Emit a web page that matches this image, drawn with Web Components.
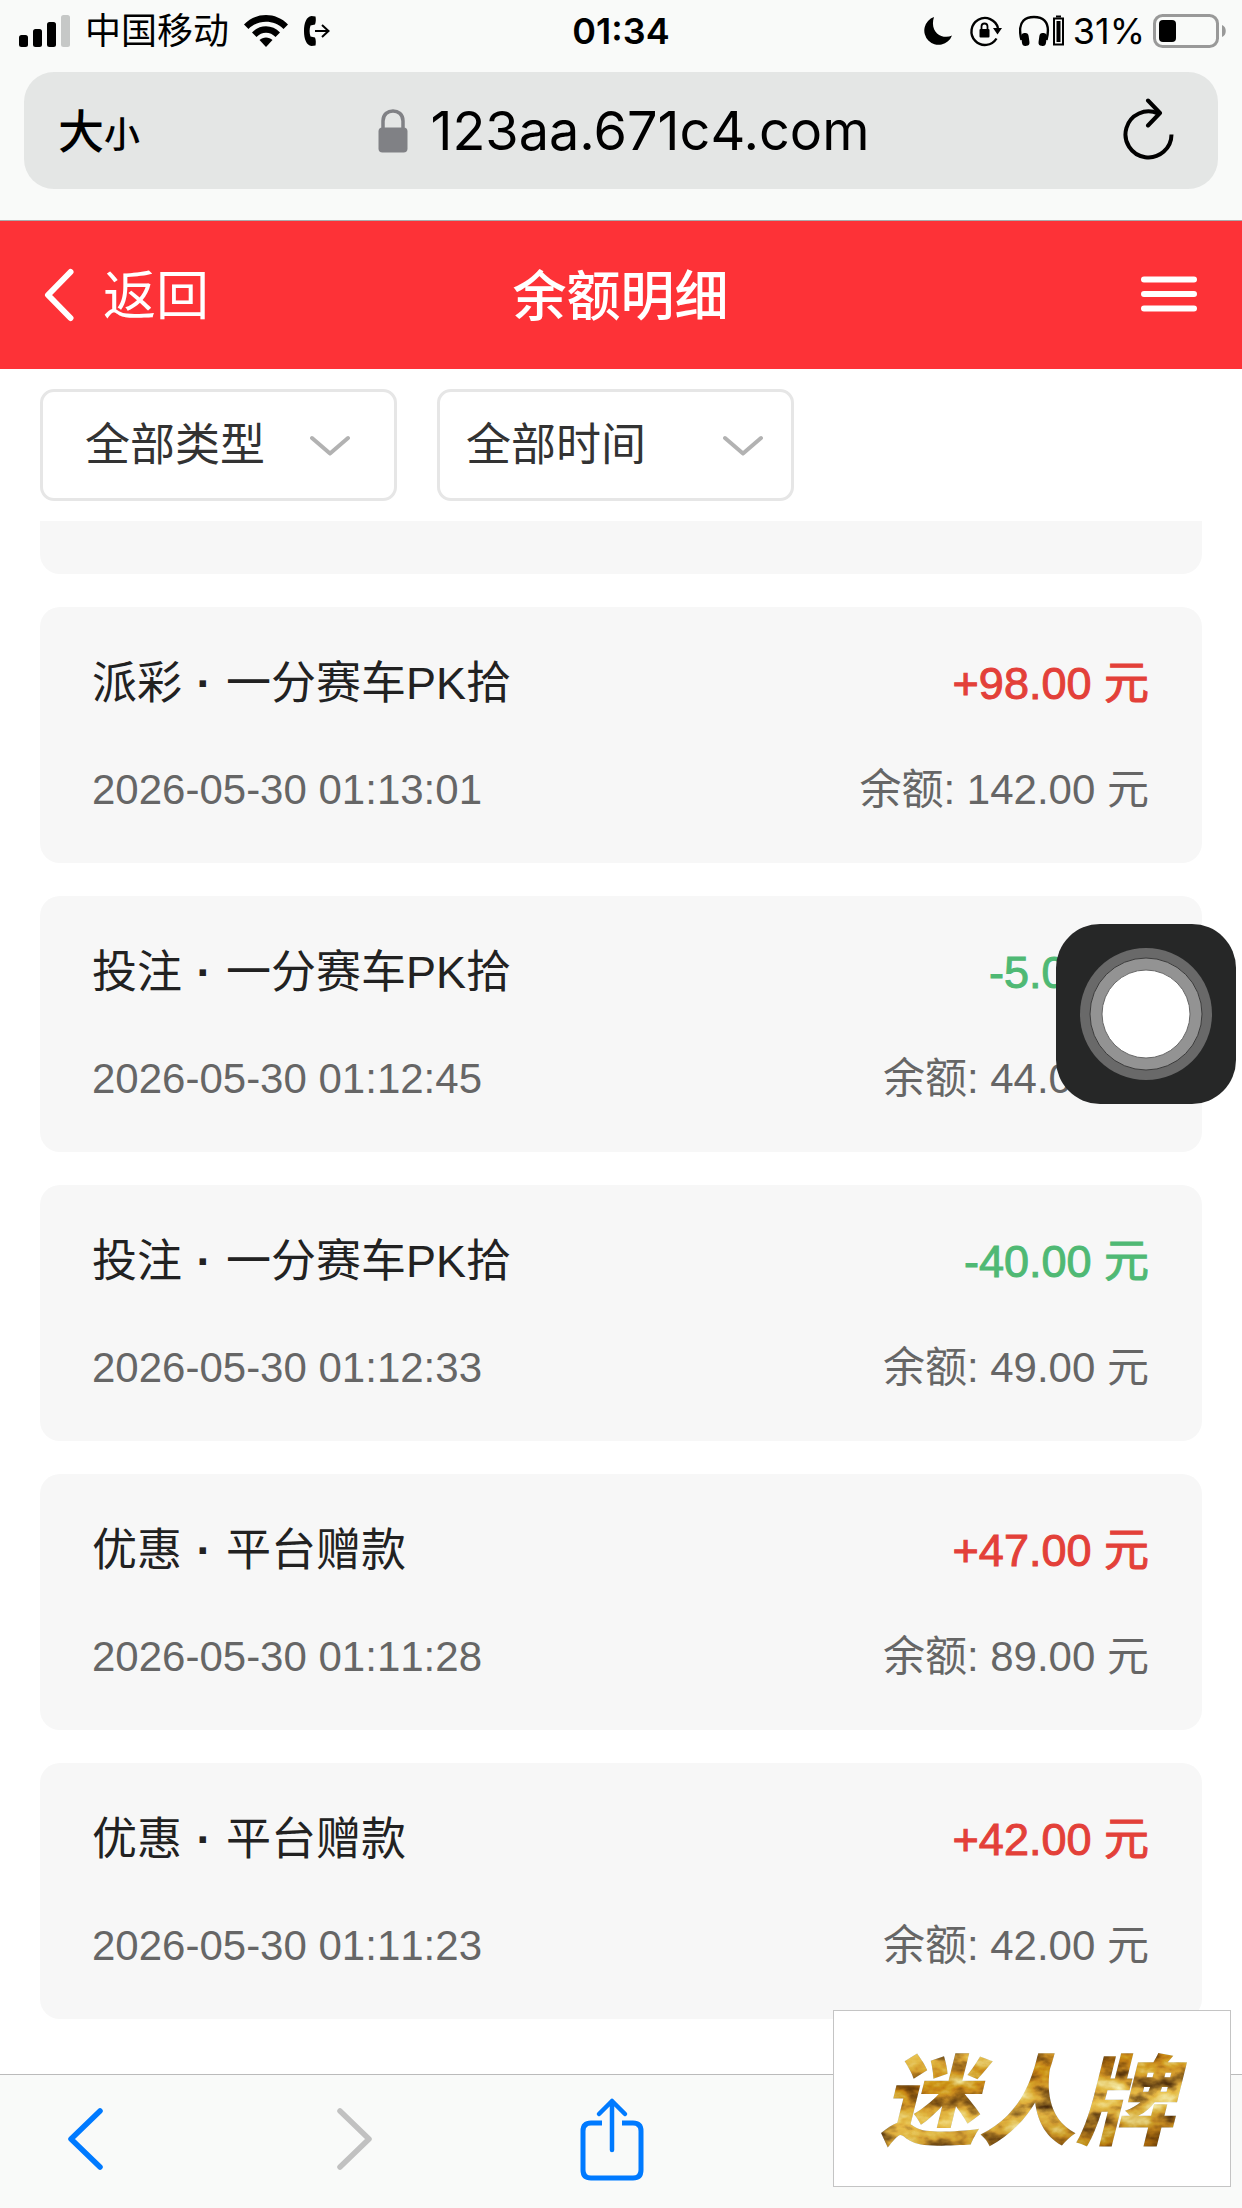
<!DOCTYPE html>
<html lang="zh-CN">
<head>
<meta charset="utf-8">
<meta name="viewport" content="width=device-width, initial-scale=1">
<title>余额明细</title>
<style>
	html, body {
		margin: 0;
		min-height: 100%;
	}
	body {
		background: #fff;
		color: #222;
		font-family: "Liberation Sans", "Noto Sans CJK SC", sans-serif;
		font-kerning: none;
	}
</style>
</head>
<body>
<balance-app></balance-app>

<script>
const icons = {
	signal: [52, 34, `
		<rect x="0" y="21" width="9" height="12" rx="2.5"/>
		<rect x="14" y="15" width="9" height="18" rx="2.5"/>
		<rect x="28" y="8" width="9" height="25" rx="2.5"/>
		<rect x="42" y="1" width="9" height="32" rx="2.5" fill="#c6c8c7"/>`],
	wifi: [46, 34, `
		<path d="M1 10.500C13-2.200 33-2.200 45 10.500L40.500 15C31 5.300 15 5.300 5.500 15Z"/>
		<path d="M9 18.500C16.500 10.300 29.500 10.300 37 18.500L32.500 23C27.300 17.300 18.700 17.300 13.500 23Z"/>
		<path d="M16.500 26C20 22.500 26 22.500 29.500 26L23 33Z"/>`],
	call: [28, 32, `
		<path d="M12.500 1.500L8.500 1C3.500 1.500 1 8 1 16C1 24 3.500 30.500 8.500 31L12.500 30.500C13 28 13 25 12 22.500L7.500 21.500C6.300 18 6.300 14 7.500 10.500L12 9.500C13 7 13 4 12.500 1.500Z"/>
		<path d="M12 16H25M19 10L25.500 16L19 22" fill="none" stroke="currentColor" stroke-width="2"/>`],
	moon: [30, 30, `<path d="M11 1A14.300 14.300 0 1 0 29 19.500C20 24 6 17 11 1Z"/>`],
	rotate: [34, 32, `
		<path d="M27.500 23.500A13.500 13.500 0 1 1 29 13" fill="none" stroke="currentColor" stroke-width="2.400"/>
		<path d="M24 13H33L28.500 19.500Z"/>
		<rect x="10.500" y="14" width="10" height="8.500" rx="1"/>
		<path d="M12.500 14V11.500A3 3 0 0 1 18.500 11.500V14" fill="none" stroke="currentColor" stroke-width="1.800"/>`],
	headphones: [46, 32, `
		<path d="M2.500 25C-3 4 9 2 15 2C21 2 33 4 27.500 25" fill="none" stroke="currentColor" stroke-width="2.400"/>
		<rect x="2.500" y="18" width="7.500" height="13" rx="3.500" transform="rotate(-8 6 24)"/>
		<rect x="20" y="18" width="7.500" height="13" rx="3.500" transform="rotate(8 24 24)"/>
		<rect x="35" y="3.500" width="9" height="26" fill="none" stroke="currentColor" stroke-width="2"/>
		<rect x="37.500" y="6" width="4" height="21"/>
		<rect x="37" y="0.500" width="5" height="2"/>`],
	battery: [76, 34, `
		<rect x="1.500" y="1.500" width="63" height="31" rx="8" fill="none" stroke="#999" stroke-width="3"/>
		<rect x="6" y="6" width="17" height="22" rx="4"/>
		<path d="M69 11C74 12.500 74 21.500 69 23Z" fill="#999"/>`],
	lock: [30, 44, `
		<rect x="0.500" y="18.500" width="29" height="25" rx="4"/>
		<path d="M5 20V12C5-1.500 25-1.500 25 12V20" fill="none" stroke="currentColor" stroke-width="3.500"/>`],
	reload: [52, 66, `
		<path d="M48.500 36.500A23 23 0 1 1 35 15.500H37" fill="none" stroke="currentColor" stroke-width="4"/>
		<path d="M25 2.500L37 15L25 27.500" fill="none" stroke="currentColor" stroke-width="4" stroke-linecap="round" stroke-linejoin="round"/>`],
	back: [30, 54, `<path d="M26.500 4L4 27L26.500 50" fill="none" stroke="currentColor" stroke-width="6" stroke-linecap="round" stroke-linejoin="round"/>`],
	menu: [56, 38, `<path d="M3 3.500H53M3 18H53M3 32.500H53" fill="none" stroke="currentColor" stroke-width="6" stroke-linecap="round"/>`],
	down: [42, 22, `<path d="M3 4L21 19.500L39 4" fill="none" stroke="currentColor" stroke-width="4" stroke-linecap="round" stroke-linejoin="round"/>`],
	prev: [36, 64, `<path d="M33 4L4 32L33 60" fill="none" stroke="currentColor" stroke-width="5.500" stroke-linecap="round" stroke-linejoin="round"/>`],
	next: [36, 64, `<path d="M3 4L32 32L3 60" fill="none" stroke="currentColor" stroke-width="5.500" stroke-linecap="round" stroke-linejoin="round"/>`],
	share: [64, 84, `
		<path d="M22 26H11Q3 26 3 34V73Q3 81 11 81H53Q61 81 61 73V34Q61 26 53 26H42" fill="none" stroke="currentColor" stroke-width="5"/>
		<path d="M32 53V4M19 17L32 4L45 17" fill="none" stroke="currentColor" stroke-width="4.500" stroke-linecap="round" stroke-linejoin="round"/>`]
};

class UiIcon extends HTMLElement {
	constructor() {
		super();
		this.attachShadow({mode: 'open'});
	}

	connectedCallback() {
		const [width, height, shape] = icons[this.getAttribute('name')];
		this.shadowRoot.innerHTML = `
			<style>
				:host { display: block; flex: none; }
				svg { display: block; }
			</style>
			<svg width="${width}" height="${height}" viewBox="0 0 ${width} ${height}" fill="currentColor" aria-hidden="true">${shape}</svg>
		`;
	}
}

class StatusBar extends HTMLElement {
	constructor() {
		super();
		this.attachShadow({mode: 'open'});
		this.shadowRoot.innerHTML = `
			<style>
				:host {
					display: grid;
					grid-template-columns: 1fr auto 1fr;
					align-items: center;
					height: 62px;
					padding: 0 13px;
					color: #000;
					font: 36px/60px Inter, "Noto Sans CJK SC", sans-serif;
				}
				div { display: flex; align-items: center; }
				.left { gap: 14px; padding-left: 6px; }
				.right { justify-content: flex-end; gap: 16px; }
				.power { gap: 8px; }
				time { font-weight: 600; }
			</style>
			<div class="left">
				<ui-icon name="signal"></ui-icon>
				<span>中国移动</span>
				<ui-icon name="wifi"></ui-icon>
				<ui-icon name="call"></ui-icon>
			</div>
			<time>01:34</time>
			<div class="right">
				<ui-icon name="moon"></ui-icon>
				<ui-icon name="rotate"></ui-icon>
				<div class="power">
					<ui-icon name="headphones"></ui-icon>
					<span>31%</span>
					<ui-icon name="battery"></ui-icon>
				</div>
			</div>
		`;
	}
}

class AddressBar extends HTMLElement {
	constructor() {
		super();
		this.attachShadow({mode: 'open'});
		this.shadowRoot.innerHTML = `
			<style>
				:host { display: block; padding: 10px 24px 31px; }
				.field {
					display: grid;
					grid-template-columns: 1fr auto 1fr;
					align-items: center;
					height: 117px;
					padding: 0 34px;
					border-radius: 30px;
					background: #e4e6e5;
					color: #000;
				}
				button {
					padding: 0;
					border: 0;
					background: none;
					color: inherit;
					cursor: pointer;
				}
				.size {
					justify-self: start;
					padding-bottom: 2px;
					font: 500 46px/60px "Noto Sans CJK SC", sans-serif;
				}
				.size small { font-size: 36px; }
				.reload { justify-self: end; padding: 0 9px; }
				.site {
					display: flex;
					align-items: center;
					gap: 22px;
					padding-left: 6px;
					font: 54px/72px Inter, sans-serif;
				}
				.site ui-icon { color: #808185; }
			</style>
			<div class="field">
				<button class="size" type="button">大<small>小</small></button>
				<div class="site"><ui-icon name="lock"></ui-icon><slot></slot></div>
				<button class="reload" type="button" aria-label="刷新"><ui-icon name="reload"></ui-icon></button>
			</div>
		`;
	}
}

class PageHeader extends HTMLElement {
	constructor() {
		super();
		this.attachShadow({mode: 'open'});
		this.shadowRoot.innerHTML = `
			<style>
				:host {
					display: grid;
					grid-template-columns: 1fr auto 1fr;
					align-items: center;
					height: 148px;
					padding: 0 45px 0 44px;
					border-top: 1px solid #aaa;
					background: #fd3237;
					color: #fff;
				}
				a {
					display: flex;
					align-items: center;
					gap: 29px;
					color: inherit;
					font-size: 53px;
					line-height: 72px;
					text-decoration: none;
				}
				a span, h1 { padding-top: 4px; }
				h1 {
					margin: 0;
					font-size: 54px;
					line-height: 72px;
					font-weight: 500;
				}
				button {
					justify-self: end;
					padding: 0;
					border: 0;
					background: none;
					color: inherit;
					cursor: pointer;
				}
			</style>
			<a href="#"><ui-icon name="back"></ui-icon><span>返回</span></a>
			<h1><slot></slot></h1>
			<button type="button" aria-label="菜单"><ui-icon name="menu"></ui-icon></button>
		`;
	}
}

class FilterSelect extends HTMLElement {
	constructor() {
		super();
		this.attachShadow({mode: 'open'});
	}

	connectedCallback() {
		const options = this.getAttribute('options').split(',');
		this.shadowRoot.innerHTML = `
			<style>
				:host { display: grid; align-items: center; flex: 0 1 357px; }
				select, ui-icon { grid-area: 1 / 1; }
				select {
					appearance: none;
					box-sizing: border-box;
					width: 100%;
					height: 112px;
					padding: 0 var(--inset, 26px);
					border: 3px solid #e6e6e6;
					border-radius: 14px;
					background: #fff;
					color: #333;
					font: inherit;
					font-size: 45px;
				}
				ui-icon {
					justify-self: end;
					margin-right: calc(var(--inset, 26px) + 4px);
					color: #b2b2b2;
					pointer-events: none;
				}
			</style>
			<select aria-label="${this.getAttribute('label')}">
				${options.map(option => `<option>${option}</option>`).join('')}
			</select>
			<ui-icon name="down"></ui-icon>
		`;
	}
}

class RecordCard extends HTMLElement {
	constructor() {
		super();
		this.attachShadow({mode: 'open'});
	}

	connectedCallback() {
		const amount = this.getAttribute('amount');
		this.shadowRoot.innerHTML = `
			<style>
				:host {
					display: grid;
					gap: 46px;
					padding: 47px 53px 43px 52px;
					border-radius: 20px;
					background: #f7f7f7;
				}
				div {
					display: flex;
					justify-content: space-between;
					line-height: 60px;
					white-space: nowrap;
				}
				.main { font-size: 45px; }
				.sub { font-size: 42px; color: #666; }
				.dot { margin: 0 2px; font-weight: 700; }
				/* medium weight between the regular and bold faces */
				.amount { -webkit-text-stroke: 1px currentColor; }
				.in { color: #e34039; }
				.out { color: #4fb974; }
			</style>
			<div class="main">
				<span>${this.getAttribute('kind')} <span class="dot">·</span> <slot></slot></span>
				<span class="amount ${amount.startsWith('+') ? 'in' : 'out'}">${amount} 元</span>
			</div>
			<div class="sub">
				<time>${this.getAttribute('time')}</time>
				<span>余额: ${this.getAttribute('balance')} 元</span>
			</div>
		`;
	}
}

class BrowserToolbar extends HTMLElement {
	constructor() {
		super();
		this.attachShadow({mode: 'open'});
		this.shadowRoot.innerHTML = `
			<style>
				:host {
					display: grid;
					grid-template-columns: 270fr 243fr 595fr;
					align-items: center;
					justify-items: start;
					box-sizing: border-box;
					height: 134px;
					padding: 0 67px 5px;
					border-top: 1px solid #bbb;
					background: #f9faf9;
					color: #007aff;
				}
				button {
					padding: 0;
					border: 0;
					background: none;
					color: inherit;
					cursor: pointer;
				}
				button:disabled { color: #c1c1c1; }
			</style>
			<button type="button" aria-label="后退"><ui-icon name="prev"></ui-icon></button>
			<button type="button" aria-label="前进" disabled><ui-icon name="next"></ui-icon></button>
			<button type="button" aria-label="分享"><ui-icon name="share"></ui-icon></button>
		`;
	}
}

class AssistiveTouch extends HTMLElement {
	constructor() {
		super();
		this.attachShadow({mode: 'open'});
		this.shadowRoot.innerHTML = `
			<style>
				:host { position: absolute; top: 924px; right: 6px; z-index: 2; }
				button {
					display: block;
					padding: 0;
					border: 0;
					border-radius: 44px;
					background: #262727;
				}
				svg { display: block; }
			</style>
			<button type="button" aria-label="辅助触控">
				<svg width="180" height="180" viewBox="0 0 180 180">
					<circle cx="90" cy="90" r="66" fill="#696969"/>
					<circle cx="90" cy="90" r="56" fill="#939393" stroke="#3c3c3c"/>
					<circle cx="90" cy="90" r="44" fill="#fff" stroke="#666"/>
				</svg>
			</button>
		`;
	}
}

class BrandStamp extends HTMLElement {
	constructor() {
		super();
		this.attachShadow({mode: 'open'});
		this.shadowRoot.innerHTML = `
			<style>
				:host {
					position: absolute;
					right: 11px;
					bottom: 21px;
					z-index: 3;
					border: 1px solid #c4c4c4;
					background: #fff;
				}
				svg { display: block; }
				text {
					font: italic 900 98px "Noto Sans CJK SC", sans-serif;
				}
			</style>
			<svg width="396" height="175" viewBox="0 0 396 175">
				<defs>
					<linearGradient id="gold" x1="0" y1="0" x2="0.300" y2="1">
						<stop offset="0" stop-color="#c68f25"/>
						<stop offset="0.250" stop-color="#e2b550"/>
						<stop offset="0.450" stop-color="#c07d14"/>
						<stop offset="0.700" stop-color="#e5b952"/>
						<stop offset="1" stop-color="#ac6e10"/>
					</linearGradient>
					<filter id="foil" x="-5%" y="-5%" width="110%" height="110%" color-interpolation-filters="sRGB">
						<feTurbulence type="fractalNoise" baseFrequency="0.030 0.050" numOctaves="4" seed="7"/>
						<feColorMatrix values="1.100 0 0 0 -0.030  1.200 0 0 0 -0.090  1.100 0 0 0 -0.120  0 0 0 0 1" result="noise"/>
						<feBlend in="noise" in2="SourceGraphic" mode="hard-light" result="mix"/>
						<feComposite in="mix" in2="SourceAlpha" operator="in"/>
					</filter>
				</defs>
				<text x="46" y="126" fill="url(#gold)" filter="url(#foil)">迷人牌</text>
			</svg>
		`;
	}
}

class BalanceApp extends HTMLElement {
	constructor() {
		super();
		this.attachShadow({mode: 'open'});
		this.shadowRoot.innerHTML = `
			<style>
				:host {
					display: flex;
					flex-direction: column;
					position: relative;
					min-height: 100vh;
				}
				.chrome { background: #f9faf9; }
				.filters { display: flex; gap: 40px; padding: 20px 40px; }
				.wide { --inset: 42px; }
				main {
					display: flex;
					flex: 1;
					flex-direction: column;
					gap: 33px;
					padding: 0 40px 40px;
				}
				/* lower edge of the record scrolled under the filters */
				.tail {
					height: 53px;
					border-radius: 0 0 20px 20px;
					background: #f7f7f7;
				}
			</style>
			<div class="chrome">
				<status-bar></status-bar>
				<address-bar>123aa.671c4.com</address-bar>
			</div>
			<page-header>余额明细</page-header>
			<div class="filters">
				<filter-select class="wide" label="类型" options="全部类型,派彩,投注,优惠"></filter-select>
				<filter-select label="时间" options="全部时间,今天,昨天"></filter-select>
			</div>
			<main>
				<div class="tail"></div>
				<record-card kind="派彩" amount="+98.00" time="2026-05-30 01:13:01" balance="142.00">一分赛车PK拾</record-card>
				<record-card kind="投注" amount="-5.00" time="2026-05-30 01:12:45" balance="44.00">一分赛车PK拾</record-card>
				<record-card kind="投注" amount="-40.00" time="2026-05-30 01:12:33" balance="49.00">一分赛车PK拾</record-card>
				<record-card kind="优惠" amount="+47.00" time="2026-05-30 01:11:28" balance="89.00">平台赠款</record-card>
				<record-card kind="优惠" amount="+42.00" time="2026-05-30 01:11:23" balance="42.00">平台赠款</record-card>
			</main>
			<browser-toolbar></browser-toolbar>
			<assistive-touch></assistive-touch>
			<brand-stamp></brand-stamp>
		`;
	}
}

customElements.define('ui-icon', UiIcon);
customElements.define('status-bar', StatusBar);
customElements.define('address-bar', AddressBar);
customElements.define('page-header', PageHeader);
customElements.define('filter-select', FilterSelect);
customElements.define('record-card', RecordCard);
customElements.define('browser-toolbar', BrowserToolbar);
customElements.define('assistive-touch', AssistiveTouch);
customElements.define('brand-stamp', BrandStamp);
customElements.define('balance-app', BalanceApp);
</script>
</body>
</html>
